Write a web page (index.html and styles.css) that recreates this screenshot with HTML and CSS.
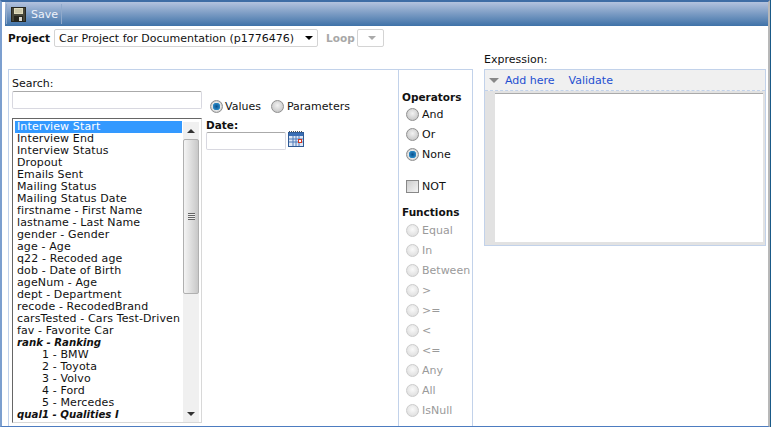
FILE: index.html
```html
<!DOCTYPE html>
<html lang="en">
<head>
    <meta charset="UTF-8">
    <meta name="viewport" content="width=device-width, initial-scale=1.0">
    <title>Expression Builder</title>
    <link rel="stylesheet" href="styles.css">
</head>
<body>
    <div class="window">
        <!-- Top toolbar -->
        <div class="toolbar">
            <div class="save-btn">
                <svg class="save-icon" width="15" height="15" viewBox="0 0 15 15">
                    <rect x="0.5" y="0.5" width="14" height="14" fill="#46463a" stroke="#26261e"/>
                    <rect x="3" y="1" width="9" height="6" fill="#e0dcbc"/>
                    <path d="M4 3h7M4 5h7" stroke="#b8b498"/>
                    <rect x="3" y="9" width="9" height="5" fill="#26261e"/>
                    <rect x="8" y="10" width="3" height="4" fill="#d8d8d0"/>
                </svg>
                <span>Save</span>
            </div>
        </div>

        <!-- Project selection -->
        <div class="project-row">
            <label class="bold">Project</label>
            <div class="select project-select">
                <span>Car Project for Documentation (p1776476)</span>
                <i class="arrow"></i>
            </div>
            <label class="bold muted">Loop</label>
            <div class="select loop-select"><i class="arrow grey"></i></div>
        </div>

        <div class="main">
            <div class="panel">
                <!-- Question list -->
                <div class="list-col">
                    <div class="search-label">Search:</div>
                    <input type="text" class="text-input search-input">
                    <div class="list-box">
                        <ul class="list">
                            <li class="selected">Interview Start</li>
                            <li>Interview End</li>
                            <li>Interview Status</li>
                            <li>Dropout</li>
                            <li>Emails Sent</li>
                            <li>Mailing Status</li>
                            <li>Mailing Status Date</li>
                            <li>firstname - First Name</li>
                            <li>lastname - Last Name</li>
                            <li>gender - Gender</li>
                            <li>age - Age</li>
                            <li>q22 - Recoded age</li>
                            <li>dob - Date of Birth</li>
                            <li>ageNum - Age</li>
                            <li>dept - Department</li>
                            <li>recode - RecodedBrand</li>
                            <li>carsTested - Cars Test-Driven</li>
                            <li>fav - Favorite Car</li>
                            <li class="group">rank - Ranking</li>
                            <li class="sub">1 - BMW</li>
                            <li class="sub">2 - Toyota</li>
                            <li class="sub">3 - Volvo</li>
                            <li class="sub">4 - Ford</li>
                            <li class="sub">5 - Mercedes</li>
                            <li class="group">qual1 - Qualities I</li>
                        </ul>
                        <div class="scrollbar">
                            <div class="scroll-btn"><i class="tri up"></i></div>
                            <div class="scroll-thumb"><div class="grip"></div></div>
                            <div class="scroll-btn bottom"><i class="tri down"></i></div>
                        </div>
                    </div>
                </div>

                <!-- Values and date -->
                <div class="value-col">
                    <div class="radio-row">
                        <div class="option"><i class="radio on"></i>Values</div>
                        <div class="option"><i class="radio"></i>Parameters</div>
                    </div>
                    <div class="bold date-label">Date:</div>
                    <div class="date-row">
                        <input type="text" class="text-input date-input">
                        <svg class="cal-icon" width="16" height="16" viewBox="0 0 16 16">
                            <rect x="0.5" y="1.5" width="15" height="14" fill="#dfe8f6" stroke="#2f5a94"/>
                            <path d="M1 0.5h14" stroke="#555" stroke-dasharray="1 1"/>
                            <rect x="1" y="2" width="14" height="3" fill="#3a6eb5"/>
                            <path d="M1 8h14M1 11h14M5 5v10M8 5v10M11 5v10" stroke="#4f7bb8"/>
                            <rect x="10.5" y="8.5" width="3" height="3" fill="#fff" stroke="#d8341c"/>
                        </svg>
                    </div>
                </div>

                <!-- Operators and functions -->
                <div class="ops-col">
                    <div class="bold ops-title">Operators</div>
                    <div class="op"><i class="radio"></i>And</div>
                    <div class="op"><i class="radio"></i>Or</div>
                    <div class="op"><i class="radio on"></i>None</div>
                    <div class="not-row"><i class="checkbox"></i>NOT</div>
                    <div class="bold funcs-title">Functions</div>
                    <div class="op off"><i class="radio"></i>Equal</div>
                    <div class="op off"><i class="radio"></i>In</div>
                    <div class="op off"><i class="radio"></i>Between</div>
                    <div class="op off"><i class="radio"></i>&gt;</div>
                    <div class="op off"><i class="radio"></i>&gt;=</div>
                    <div class="op off"><i class="radio"></i>&lt;</div>
                    <div class="op off"><i class="radio"></i>&lt;=</div>
                    <div class="op off"><i class="radio"></i>Any</div>
                    <div class="op off"><i class="radio"></i>All</div>
                    <div class="op off"><i class="radio"></i>IsNull</div>
                </div>
            </div>

            <!-- Expression editor -->
            <div class="expr-col">
                <div class="expr-label">Expression:</div>
                <div class="expr-box">
                    <div class="expr-bar">
                        <i class="tri-big"></i>
                        <a href="#">Add here</a>
                        <a href="#">Validate</a>
                    </div>
                    <div class="expr-body">
                        <div class="expr-area"></div>
                    </div>
                </div>
            </div>
        </div>
    </div>
</body>
</html>
```

FILE: styles.css
```css
* {
    box-sizing: border-box;
}

html, body {
    margin: 0;
    height: 427px;
    overflow: hidden;
}

body {
    font-family: "DejaVu Sans", Verdana, sans-serif;
    font-size: 11px;
    color: #111;
    background-color: #1a5a88;
}

.window {
    width: 770px;
    height: 427px;
    background-color: #fff;
    border-top: 2px solid #3f6da5;
    border-left: 2px solid #7c9fcf;
    border-right: 2px solid #b8b8b8;
    border-bottom: 1px solid #4d7cc0;
    overflow: hidden;
}

.bold {
    font-weight: bold;
    font-size: 10.5px;
}

.muted {
    color: #a8a8a8;
}

/* Toolbar */
.toolbar {
    height: 24px;
    margin-left: 3px;
    background: linear-gradient(#b4c3de, #3f72a8);
}

.save-btn {
    display: inline-flex;
    align-items: center;
    gap: 5px;
    height: 20px;
    margin-top: 2px;
    margin-left: 1px;
    padding: 0 3px 0 4px;
    color: #eef2fa;
    border-left: 1px solid #8fa9cb;
    border-right: 1px solid #8fa9cb;
}

.save-btn span {
    padding-top: 1px;
}

/* Project row */
.project-row {
    display: flex;
    align-items: center;
    height: 21px;
    margin-top: 1px;
    padding-left: 6px;
}

.project-select {
    width: 264px;
    margin-left: 4px;
    padding-left: 4px;
    padding-top: 1px;
}

.loop-select {
    width: 27px;
    margin-left: 2px;
}

.select {
    position: relative;
    display: flex;
    align-items: center;
    height: 18px;
    background-color: #fff;
    border: 1px solid #d4d4d4;
    border-radius: 2px;
}

.project-row .muted {
    margin-left: 8px;
}

.arrow {
    position: absolute;
    right: 4px;
    top: 6px;
    border-left: 4px solid transparent;
    border-right: 4px solid transparent;
    border-top: 4px solid #000;
}

.arrow.grey {
    right: 7px;
    border-top-color: #aaa;
}

/* Main area */
.main {
    display: flex;
    align-items: flex-start;
    padding-left: 6px;
    margin-top: 1px;
}

.panel {
    display: flex;
    width: 465px;
    height: 360px;
    margin-top: 20px;
    border: 1px solid #c2d2ea;
}

.list-col {
    flex: none;
    width: 193px;
    padding: 7px 0 0 3px;
}

.search-label {
    height: 13px;
    line-height: 13px;
}

.text-input {
    display: block;
    background-color: #fff;
    border: 1px solid #d8d8e0;
    border-top-color: #aaa;
    border-radius: 2px;
    outline: none;
}

.search-input {
    width: 190px;
    height: 18px;
    margin-top: 1px;
}

.list-box {
    display: flex;
    width: 190px;
    height: 305px;
    margin-top: 9px;
    border: 1px solid #d8d8d8;
    border-top-color: #666;
    border-left-color: #666;
}

.list {
    width: 169px;
    margin: 0;
    padding: 2px 0 0 2px;
    list-style: none;
    overflow: hidden;
    letter-spacing: 0.12px;
}

.list li {
    height: 12px;
    line-height: 12px;
    padding-left: 2px;
    white-space: nowrap;
}

.list .selected {
    color: #fff;
    background-color: #3399ff;
}

.list .group {
    font-style: italic;
    font-weight: bold;
    font-size: 10.2px;
    line-height: 11px;
    letter-spacing: 0;
}

.list .sub {
    padding-left: 27px;
}

.scrollbar {
    display: flex;
    flex-direction: column;
    width: 16px;
    margin-top: 3px;
    margin-left: 1px;
    margin-right: 2px;
    background-color: #f0f0f0;
}

.scroll-btn {
    display: flex;
    align-items: center;
    justify-content: center;
    height: 17px;
}

.scroll-btn.bottom {
    margin-top: auto;
}

.tri {
    border-left: 4px solid transparent;
    border-right: 4px solid transparent;
}

.tri.up {
    border-bottom: 4px solid #333;
}

.tri.down {
    border-top: 4px solid #333;
}

.scroll-thumb {
    display: flex;
    align-items: center;
    justify-content: center;
    height: 155px;
    background: linear-gradient(90deg, #f4f4f4, #c8c8c8);
    border: 1px solid #b0b0b0;
    border-radius: 2px;
}

.grip {
    width: 7px;
    height: 7px;
    background: repeating-linear-gradient(#666 0, #666 1px, #eee 1px, #eee 2px);
}

.value-col {
    flex: none;
    width: 196px;
    padding: 29px 0 0 4px;
}

.radio-row {
    display: flex;
    gap: 10px;
    height: 14px;
    padding-left: 4px;
}

.option, .op, .not-row {
    display: flex;
    align-items: center;
}

.radio {
    display: block;
    flex: none;
    width: 13px;
    height: 13px;
    margin-right: 3px;
    border: 1px solid #8f8f8f;
    border-radius: 50%;
    background: radial-gradient(circle at 50% 40%, #f2f2f2, #bcbcbc);
}

.option .radio.on {
    margin-right: 2px;
}

.radio.on {
    background: radial-gradient(circle, #0a4f8c 0, #2b8ac6 3.5px, #e8e8e8 4px, #bcbcbc 6.5px);
}

.date-label {
    height: 13px;
    line-height: 13px;
    margin-top: 6px;
}

.date-row {
    display: flex;
    align-items: flex-start;
    gap: 2px;
}

.date-input {
    width: 80px;
    height: 18px;
}

.cal-icon {
    margin-top: -1px;
}

.ops-col {
    flex: 1;
    padding: 21px 0 0 0;
    border-left: 1px solid #c2d2ea;
}

.ops-title {
    height: 13px;
    line-height: 13px;
    padding-left: 3px;
}

.op {
    height: 20px;
    padding-left: 7px;
}

.op.off {
    color: #9a9a9a;
}

.op.off .radio {
    border-color: #ccc;
    background: radial-gradient(circle at 50% 40%, #fafafa, #d8d8d8);
}

.not-row {
    height: 14px;
    margin-top: 15px;
    padding-left: 7px;
}

.checkbox {
    display: block;
    width: 13px;
    height: 13px;
    margin-right: 3px;
    border: 1px solid #888;
    background: linear-gradient(135deg, #ccc, #f4f4f4);
}

.funcs-title {
    height: 13px;
    line-height: 13px;
    margin-top: 13px;
    margin-bottom: 1px;
    padding-left: 3px;
}

/* Expression editor */
.expr-col {
    width: 282px;
    margin-left: 11px;
}

.expr-label {
    height: 20px;
    line-height: 14px;
    padding-top: 4px;
}

.expr-box {
    height: 177px;
    border: 1px solid #c2d2ea;
    background-color: #e2e2e2;
}

.expr-bar {
    display: flex;
    align-items: center;
    gap: 14px;
    height: 21px;
    padding-left: 4px;
    padding-top: 1px;
    background-color: #f0f0f0;
    border-bottom: 1px dashed #c2d2ea;
}

.expr-bar a {
    color: #1f4fd0;
    text-decoration: none;
}

.tri-big {
    margin-right: -8px;
    border-left: 5px solid transparent;
    border-right: 5px solid transparent;
    border-top: 5px solid #888;
}

.expr-body {
    height: 154px;
    padding: 2px 2px 3px 10px;
}

.expr-area {
    height: 100%;
    background-color: #fff;
    border-top: 1px solid #aaa;
}
```
